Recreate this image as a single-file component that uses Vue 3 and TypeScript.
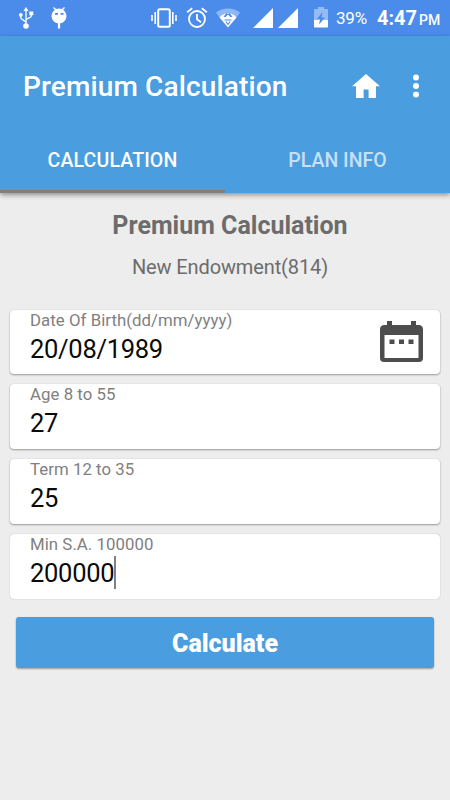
<script setup lang="ts">
import { ref } from 'vue'

interface Field {
  label: string
  value: string
  calendar?: boolean
  focused?: boolean
}

const tabs = ['CALCULATION', 'PLAN INFO']
const activeTab = ref(0)

const fields = ref<Field[]>([
  { label: 'Date Of Birth(dd/mm/yyyy)', value: '20/08/1989', calendar: true },
  { label: 'Age 8 to 55', value: '27' },
  { label: 'Term 12 to 35', value: '25' },
  { label: 'Min S.A. 100000', value: '200000', focused: true },
])
</script>

<template>
  <div class="screen">
    <div class="status">
      <svg class="usb" width="16" height="24" viewBox="0 0 16 24">
        <g fill="none" stroke="#fff" stroke-width="1.3">
          <path d="M8 4v15M2.8 9v2.8c0 2 5.2 3 5.2 4.600M13.300 7.500v2.500c0 2.200-5.300 2.200-5.300 4.400" />
        </g>
        <path fill="#fff" d="M8 1l2.500 4h-5zM11.300 5.500h4v3.800h-4z" />
        <circle cx="2.800" cy="8.800" r="1.900" fill="#fff" />
        <circle cx="8" cy="20" r="2.800" fill="#fff" />
      </svg>
      <svg class="droid" width="18" height="24" viewBox="0 0 18 24">
        <path d="M3.500 1.500L6 4M14.500 1.500L12 4" stroke="#fff" stroke-width="1.400" />
        <circle cx="9" cy="10" r="7.500" fill="#fff" />
        <path d="M9 15v7.500" stroke="#fff" stroke-width="2.200" />
        <path d="M5 7.800h3M10.500 7.800h3" stroke="#4b8ceb" stroke-width="1.700" />
      </svg>
      <svg class="vibrate" width="26" height="22" viewBox="0 0 26 22">
        <rect x="7.200" y="2.200" width="11.600" height="17.600" rx="1.500" fill="none" stroke="#fff" stroke-width="2" />
        <path d="M4.200 5v12M1 8v6M21.800 5v12M25 8v6" stroke="#fff" stroke-width="1.600" />
      </svg>
      <svg class="alarm" width="22" height="22" viewBox="0 0 22 22">
        <g fill="none" stroke="#fff" stroke-width="1.800">
          <circle cx="11" cy="12" r="8" />
          <path d="M11 7v5.200l4 3M1.200 5.200L6.200 1.300M20.800 5.200L15.800 1.300" />
        </g>
      </svg>
      <svg class="wifi" width="24" height="20" viewBox="0 0 24 20">
        <path d="M0 4.500C7-1 17-1 24 4.500l-4 5.500H4z" fill="#8db8f5" />
        <path d="M3.500 9.500C8.500 3.500 15.500 3.500 20.500 9.500L12 19.500z" fill="#fff" />
        <path d="M10.500 4.800L7.500 9h2.200L12 6.500 14.300 9h2.200l-3-4.200L12 6z" fill="#4b8ceb" />
        <path d="M8.500 12h7M9.800 13.500L12 16.300l2.200-2.800" fill="none" stroke="#4b8ceb" stroke-width="1.100" />
      </svg>
      <svg class="signal" width="45" height="20" viewBox="0 0 45 20">
        <path d="M0 20L20 0v20zM25 20L45 0v20z" fill="#fff" />
      </svg>
      <svg class="battery" width="14" height="21" viewBox="0 0 14 21">
        <path d="M4 0h6v2h4v11H0V2h4z" fill="#93bbf5" />
        <path d="M0 13h14v6.500q0 1-1 1H1q-1 0-1-1z" fill="#fff" />
        <path d="M8.500 5L3 12h3.200L5 17.500l6-7H7.500z" fill="#4b8ceb" />
      </svg>
      <span class="percent">39%</span>
      <span class="time">4:47</span>
      <span class="pm">PM</span>
    </div>

    <header class="appbar">
      <div class="toolbar">
        <h1 class="title">Premium Calculation</h1>
        <svg class="home" width="28" height="24" viewBox="0 0 28 24">
          <path d="M14 0L0 12.300h4V24h7.600v-8.500h5V24h7.400V12.300h4z" fill="#fff" />
        </svg>
        <svg class="more" width="6" height="24" viewBox="0 0 6 24">
          <g fill="#fff">
            <circle cx="3" cy="3.500" r="3" />
            <circle cx="3" cy="12" r="3" />
            <circle cx="3" cy="20.500" r="3" />
          </g>
        </svg>
      </div>
      <nav class="tabs">
        <div
          v-for="(tab, i) in tabs"
          :key="tab"
          class="tab"
          :class="{ active: i === activeTab }"
          @click="activeTab = i"
        >
          <span>{{ tab }}</span>
        </div>
      </nav>
    </header>

    <main class="content">
      <h2 class="heading"><span>Premium Calculation</span></h2>
      <p class="plan"><span>New Endowment(814)</span></p>

      <div class="fields">
        <div
          v-for="field in fields"
          :key="field.label"
          class="card"
          :class="{ focused: field.focused }"
        >
          <div class="text">
            <div class="label">{{ field.label }}</div>
            <div class="value">
              <span>{{ field.value }}</span><i v-if="field.focused" class="caret"></i>
            </div>
          </div>
          <svg v-if="field.calendar" class="calendar" width="43" height="41" viewBox="0 0 43 41">
            <path
              fill="#4d4d4d"
              fill-rule="evenodd"
              d="M7 0h5v4h19V0h5v4h2.500Q43 4 43 8.500V37q0 4-4 4H4q-4 0-4-4V8.500Q0 4 4.500 4H7zM4.500 14V37h34V14z"
            />
            <path fill="#4d4d4d" d="M9.500 18.500h5v4.500h-5zM19 18.500h5v4.500h-5zM28.500 18.500h5v4.500h-5z" />
          </svg>
        </div>
      </div>

      <button class="calculate" type="button">Calculate</button>
    </main>
  </div>
</template>

<style>
body {
  margin: 0;
  background: #ededed;
}
</style>

<style scoped>
.screen {
  width: 450px;
  height: 800px;
  overflow: hidden;
  background: #ededed;
  font-family: Roboto, sans-serif;
  display: flex;
  flex-direction: column;
}

svg {
  display: block;
  flex: none;
}

.status {
  height: 36px;
  flex: none;
  box-sizing: border-box;
  padding-left: 18px;
  background: #4b8ceb;
  color: #fff;
  display: flex;
  align-items: center;
  white-space: nowrap;
}

.droid {
  margin-left: 16px;
}

.vibrate {
  margin-left: 83px;
}

.alarm {
  margin-left: 9px;
}

.wifi {
  margin-left: 8px;
}

.signal {
  margin-left: 13px;
}

.battery {
  margin-left: 16px;
  margin-bottom: 2px;
}

.percent {
  width: 33px;
  margin-left: 8px;
  font-size: 17px;
  letter-spacing: -0.2px;
  line-height: 36px;
}

.time {
  width: 41px;
  margin-left: 8px;
  padding-top: 1px;
  font-size: 20px;
  font-weight: 700;
  line-height: 35px;
}

.pm {
  margin-left: 1px;
  padding-top: 4px;
  font-size: 14px;
  font-weight: 500;
  line-height: 32px;
}

.appbar {
  height: 157px;
  flex: none;
  background: #4a9ddf;
  box-shadow: 0 2px 5px rgba(0, 0, 0, 0.4);
}

.toolbar {
  height: 100px;
  display: flex;
  align-items: center;
}

.title {
  width: 329px;
  margin: 0 0 0 23px;
  padding-top: 2px;
  color: #fff;
  font-size: 28px;
  font-weight: 500;
  letter-spacing: 0.14px;
  line-height: 98px;
  white-space: nowrap;
}

.more {
  margin-left: 33px;
}

.tabs {
  height: 57px;
  display: flex;
}

.tab {
  width: 225px;
  box-sizing: border-box;
  border-bottom: 3px solid transparent;
  color: rgba(255, 255, 255, 0.7);
  font-size: 19.5px;
  font-weight: 500;
  line-height: 49px;
  text-align: center;
}

.tab.active {
  color: #fff;
  letter-spacing: 0.15px;
  border-bottom-color: #808080;
}

.content {
  padding: 0 10px;
}

.heading {
  margin: 13px 0 0 10px;
  color: #6c6c6c;
  font-size: 25px;
  font-weight: 700;
  line-height: 40px;
  text-align: center;
}

.plan {
  margin: 6px 0 0 10px;
  color: #6c6c6c;
  font-size: 20px;
  letter-spacing: -0.12px;
  line-height: 30px;
  text-align: center;
}

.fields {
  margin-top: 28px;
  display: grid;
  grid-template-rows: 64px 65px 65px 65px;
  row-gap: 10px;
}

.card {
  padding-left: 20px;
  border-radius: 4px;
  background: #fff;
  box-shadow: 0 1px 2px rgba(0, 0, 0, 0.35), 0 0 1px rgba(0, 0, 0, 0.2);
  display: flex;
}

.card.focused {
  box-shadow: 0 0 1px rgba(0, 0, 0, 0.4);
}

.text {
  flex: 1;
}

.label {
  height: 21px;
  color: #808080;
  font-size: 16.800px;
  letter-spacing: 0.05px;
  line-height: 21px;
}

.value {
  height: 36px;
  color: #0a0a0a;
  font-size: 25.500px;
  letter-spacing: -0.28px;
  line-height: 36px;
  display: flex;
}

.caret {
  width: 2px;
  height: 33px;
  margin-top: 1px;
  background: #808080;
}

.calendar {
  margin: 11px 17px 0 0;
}

.calculate {
  display: block;
  width: 418px;
  height: 51px;
  margin: 18px 0 0 6px;
  padding: 3px 0 0;
  border: 0;
  border-radius: 3px;
  background: #4a9ddf;
  box-shadow: 0 1px 2px rgba(0, 0, 0, 0.35);
  color: #fff;
  font-family: inherit;
  font-size: 25px;
  font-weight: 900;
  line-height: 48px;
}
</style>
